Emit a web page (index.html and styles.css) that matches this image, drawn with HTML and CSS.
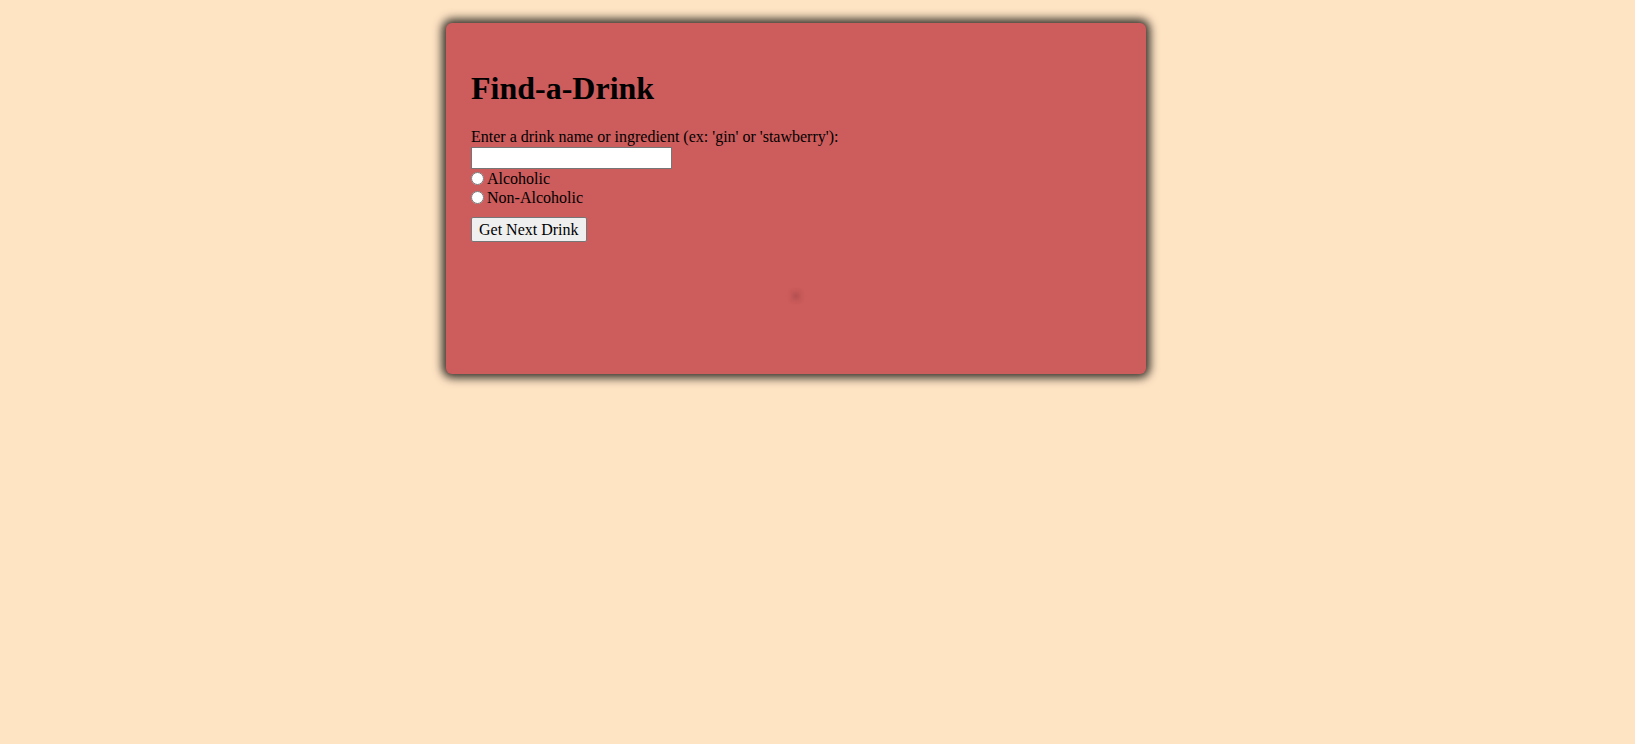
FILE: index.html
```html
<!DOCTYPE html>
<html>
<head>
<meta charset="utf-8">
<link rel="stylesheet" href="styles.css">
<title>Find-a-Drink</title>
</head>
<body>
<div class="card">
  <h1 class="title">Find-a-Drink</h1>
  <label class="prompt" for="q">Enter a drink name or ingredient (ex: 'gin' or 'stawberry'):</label><br>
  <input class="search" id="q" type="text"><br>
  <input class="radio" type="radio" name="kind" id="alc"><label for="alc">Alcoholic</label><br>
  <input class="radio" type="radio" name="kind" id="non"><label for="non">Non-Alcoholic</label><br>
  <button class="next">Get Next Drink</button>
  <div class="result"><div class="spot"></div></div>
</div>
</body>
</html>
```
FILE: styles.css
```css
html, body {
  margin: 0;
  padding: 0;
}
body {
  background: #ffe4c4;
  font-family: "Liberation Serif", "Times New Roman", serif;
  font-size: 16px;
  color: #000;
  height: 744px;
}
.card {
  box-sizing: border-box;
  width: 700px;
  height: 351px;
  margin: 23px 0 0 446px;
  padding: 26px 25px 25px 25px;
  background: #cd5c5c;
  border-radius: 6px;
  box-shadow: 0 0 10px 4px rgba(0, 0, 0, 0.8);
}
.title {
  font-size: 32px;
  font-weight: bold;
  margin: 21px 0 21px 0;
  line-height: 37px;
}
.prompt {
  line-height: 18px;
}
.search {
  box-sizing: border-box;
  width: 201px;
  height: 22px;
  margin: 1px 0 0 0;
  border: 1px solid #767676;
  background: #fff;
  padding: 1px 2px;
}
.radio {
  width: 13px;
  height: 13px;
  margin: 3px 3px 0 0;
  vertical-align: -1px;
}
.next {
  margin-top: 10px;
  font-family: "Liberation Serif", "Times New Roman", serif;
  font-size: 16px;
  height: 25px;
  padding: 1px 7px;
  border: 1px solid #767676;
  border-radius: 2px;
  background: #efefef;
  color: #000;
}
.result {
  display: flex;
  justify-content: center;
  padding-top: 54px;
}
.spot {
  width: 0;
  height: 0;
  box-shadow: 0 0 6px 3px rgba(0, 0, 0, 0.25);
}
```
